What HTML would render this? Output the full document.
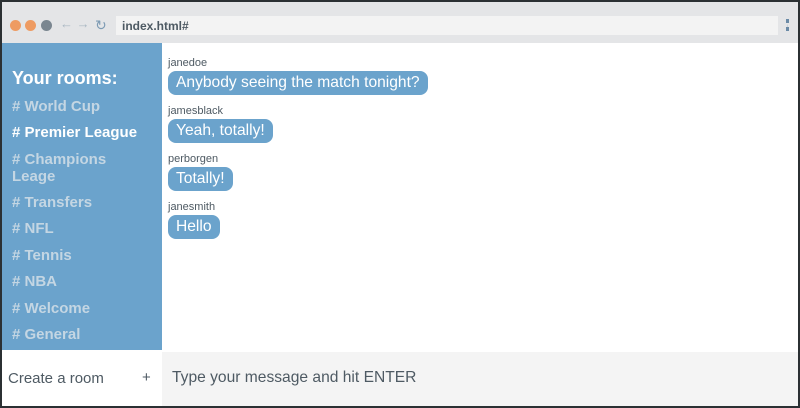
<!DOCTYPE html>
<html><head><style>
*{margin:0;padding:0;box-sizing:border-box}
body{width:800px;height:408px;background:#2b3033;font-family:"Liberation Sans",sans-serif;overflow:hidden;position:relative}
.win{position:absolute;left:2px;top:2px;width:796px;height:404px;background:#fff}
.bar{position:absolute;left:0;top:0;width:796px;height:41px;background:#e4e5e7}
.dot{position:absolute;top:18px;width:11px;height:11px;border-radius:50%;background:#ee9b62}
.url{position:absolute;left:114px;top:14px;width:662px;height:19px;background:#f3f3f3;font-size:12px;font-weight:bold;color:#4e5a63;padding:3px 6px}
.side{position:absolute;left:0;top:41px;width:160px;height:307px;background:#6ba3cc;color:#fff;font-weight:bold}
.side h2{position:absolute;left:10px;top:25px;font-size:18px}
.room{position:absolute;left:10px;font-size:15px;color:#c4d6e3;line-height:17px;width:140px}
.msgs{position:absolute;left:160px;top:41px}
.u{position:absolute;left:6px;font-size:11px;color:#4e5a63}
.b{position:absolute;left:6px;height:24px;border-radius:8px;background:#6ba3cc;color:#fff;font-size:15.6px;line-height:24px;padding:0 8px;white-space:nowrap}
.foot{position:absolute;left:0;top:348px;width:796px;height:56px;background:#fff}
.inp{position:absolute;left:160px;top:2px;width:636px;height:54px;background:#f4f4f4;font-size:15.6px;color:#4e5a63;padding:17px 10px}
</style></head><body>
<div class="win">
<div class="bar">
<div class="dot" style="left:8px"></div><div class="dot" style="left:23px"></div>
<div class="dot" style="left:39px;background:#7a8690"></div>
<div style="position:absolute;left:58px;top:14px;font-size:13px;color:#a9b7c2">← →</div>
<div style="position:absolute;left:93px;top:15px;font-size:14px;color:#7d9bb4">↻</div>
<div class="url">index.html#</div>
<div style="position:absolute;left:784px;top:17px;width:3px;height:12px;border-left:3px dotted #6a8aa6"></div>
</div>
<div class="side">
<h2>Your rooms:</h2>
<div class="room" style="top:55px"># World Cup</div>
<div class="room" style="top:81px;color:#fff"># Premier League</div>
<div class="room" style="top:108px"># Champions Leage</div>
<div class="room" style="top:151px"># Transfers</div>
<div class="room" style="top:177px"># NFL</div>
<div class="room" style="top:204px"># Tennis</div>
<div class="room" style="top:230px"># NBA</div>
<div class="room" style="top:257px"># Welcome</div>
<div class="room" style="top:283px"># General</div>
</div>
<div class="msgs">
<div class="u" style="top:14px">janedoe</div><div class="b" style="top:28px">Anybody seeing the match tonight?</div>
<div class="u" style="top:62px">jamesblack</div><div class="b" style="top:76px">Yeah, totally!</div>
<div class="u" style="top:110px">perborgen</div><div class="b" style="top:124px">Totally!</div>
<div class="u" style="top:158px">janesmith</div><div class="b" style="top:172px">Hello</div>
</div>
<div class="foot">
<div style="position:absolute;left:6px;top:20px;font-size:15px;color:#4e5a63">Create a room</div>
<div style="position:absolute;left:140px;top:19px;font-size:15px;color:#4e5a63">+</div>
<div class="inp">Type your message and hit ENTER</div>
</div>
</div>
</body></html>
